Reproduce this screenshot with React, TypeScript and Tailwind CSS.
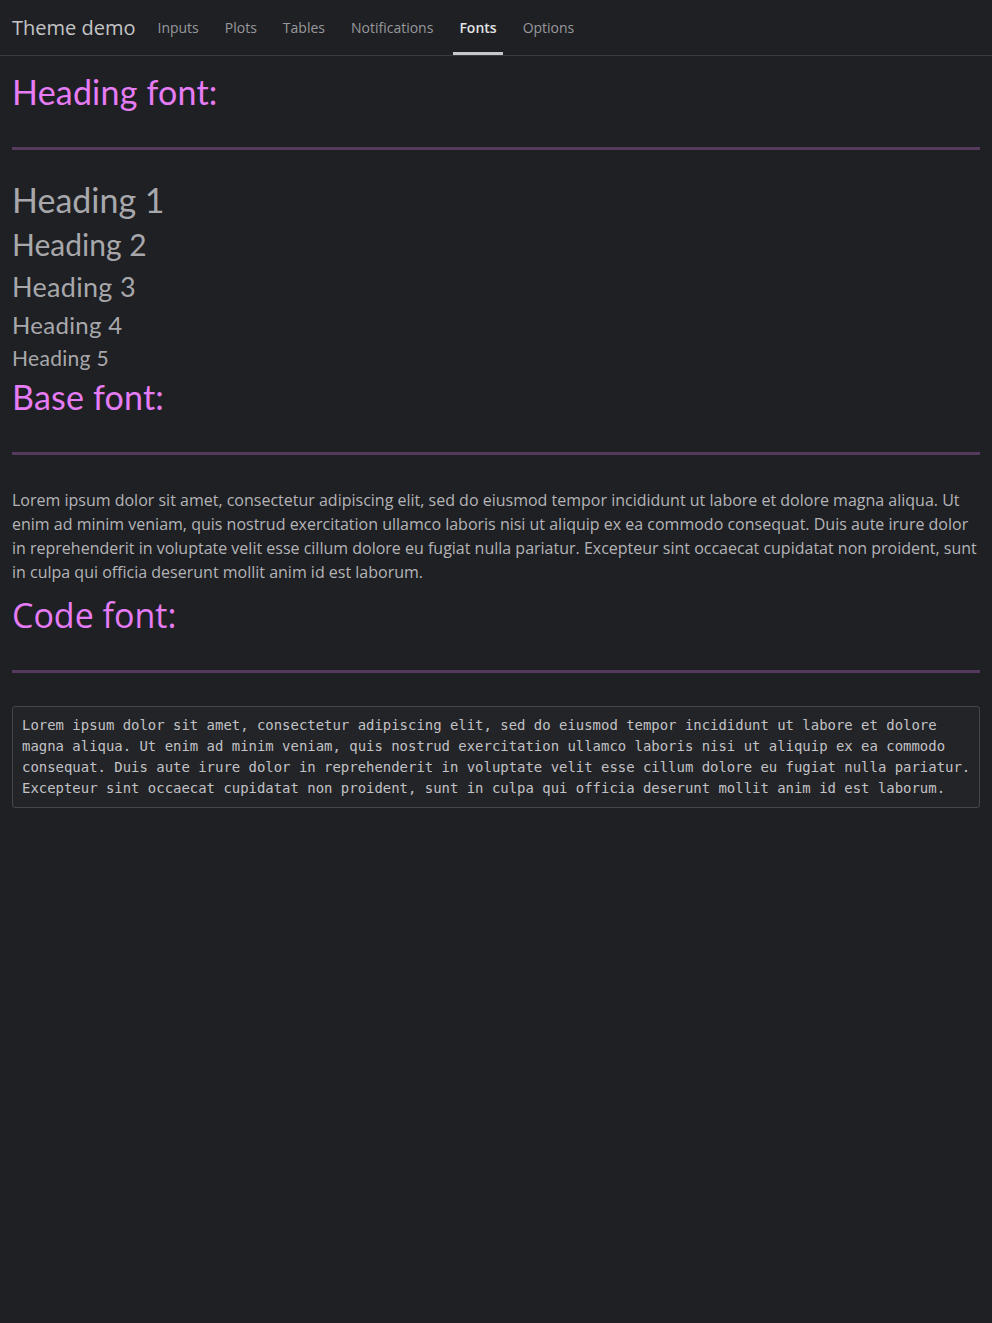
const tabs = ['Inputs', 'Plots', 'Tables', 'Notifications', 'Fonts', 'Options'];

const lorem =
  'Lorem ipsum dolor sit amet, consectetur adipiscing elit, sed do eiusmod tempor incididunt ut labore et dolore magna aliqua. Ut enim ad minim veniam, quis nostrud exercitation ullamco laboris nisi ut aliquip ex ea commodo consequat. Duis aute irure dolor in reprehenderit in voluptate velit esse cillum dolore eu fugiat nulla pariatur. Excepteur sint occaecat cupidatat non proident, sunt in culpa qui officia deserunt mollit anim id est laborum.';

const codeLines = [
  'Lorem ipsum dolor sit amet, consectetur adipiscing elit, sed do eiusmod tempor incididunt ut labore et dolore',
  'magna aliqua. Ut enim ad minim veniam, quis nostrud exercitation ullamco laboris nisi ut aliquip ex ea commodo',
  'consequat. Duis aute irure dolor in reprehenderit in voluptate velit esse cillum dolore eu fugiat nulla pariatur.',
  'Excepteur sint occaecat cupidatat non proident, sunt in culpa qui officia deserunt mollit anim id est laborum.'
];

const SectionTitle = ({ children }: { children: string }) => (
  <>
    <h2 className="text-[34px] leading-[41px] text-[#e67cf5] font-['Lato',sans-serif] tracking-[0.2px]">
      {children}
    </h2>
    <hr className="mt-[35px] border-0 h-[3px] bg-[#563a5e]" />
  </>
);

const App = () => {
  return (
    <div className="min-h-[1323px] bg-[#1f2023] font-['Open_Sans',sans-serif]">
      <nav className="flex items-stretch h-[56px] px-3 border-b border-[#3a3b3e]">
        <div className="flex items-center text-[20px] text-[#c4c4c6] mr-4">Theme demo</div>
        <div className="flex gap-[14px]">
          {tabs.map((tab) => {
            const active = tab === 'Fonts';
            return (
              <div
                key={tab}
                className={`flex items-center px-[6px] pt-[2px] text-[14px] border-b-[3px] ${
                  active
                    ? 'text-[#e2e2e4] font-semibold border-[#c8c8cc]'
                    : 'text-[#98989c] border-transparent'
                }`}
              >
                {tab}
              </div>
            );
          })}
        </div>
      </nav>

      <main className="px-3">
        <div className="pt-[15px]">
          <SectionTitle>Heading font:</SectionTitle>
        </div>

        <div className="flex flex-col items-start text-[#a8a8ac] font-['Lato',sans-serif] mt-[29px]">
          <h1 className="text-[34px] leading-[41px]">Heading 1</h1>
          <h2 className="text-[30px] leading-[36px] mt-[6px]">Heading 2</h2>
          <h3 className="text-[27px] leading-[32px] mt-[9px] tracking-[0.3px]">Heading 3</h3>
          <h4 className="text-[24px] leading-[28px] mt-[8px] tracking-[0.3px]">Heading 4</h4>
          <h5 className="text-[21px] leading-[24px] mt-[7px] tracking-[0.3px]">Heading 5</h5>
        </div>

        <div className="mt-[6px]">
          <SectionTitle>Base font:</SectionTitle>
        </div>

        <p className="mt-[33px] text-[16px] leading-[24px] text-[#b4b4b8]">{lorem}</p>

        <div className="mt-[11px]">
          <h2 className="text-[34px] leading-[41px] text-[#e67cf5]">Code font:</h2>
          <hr className="mt-[34px] border-0 h-[3px] bg-[#563a5e]" />
        </div>

        <pre className="mt-[33px] px-[9px] py-2 border border-[#45464a] rounded-[3px] bg-[#232427] text-[13.94px] leading-[21px] text-[#c2c2c6] font-['DejaVu_Sans_Mono',monospace] whitespace-pre overflow-hidden">
          {codeLines.map((line) => (
            <div key={line}>{line}</div>
          ))}
        </pre>
      </main>
    </div>
  );
};

export default App;
